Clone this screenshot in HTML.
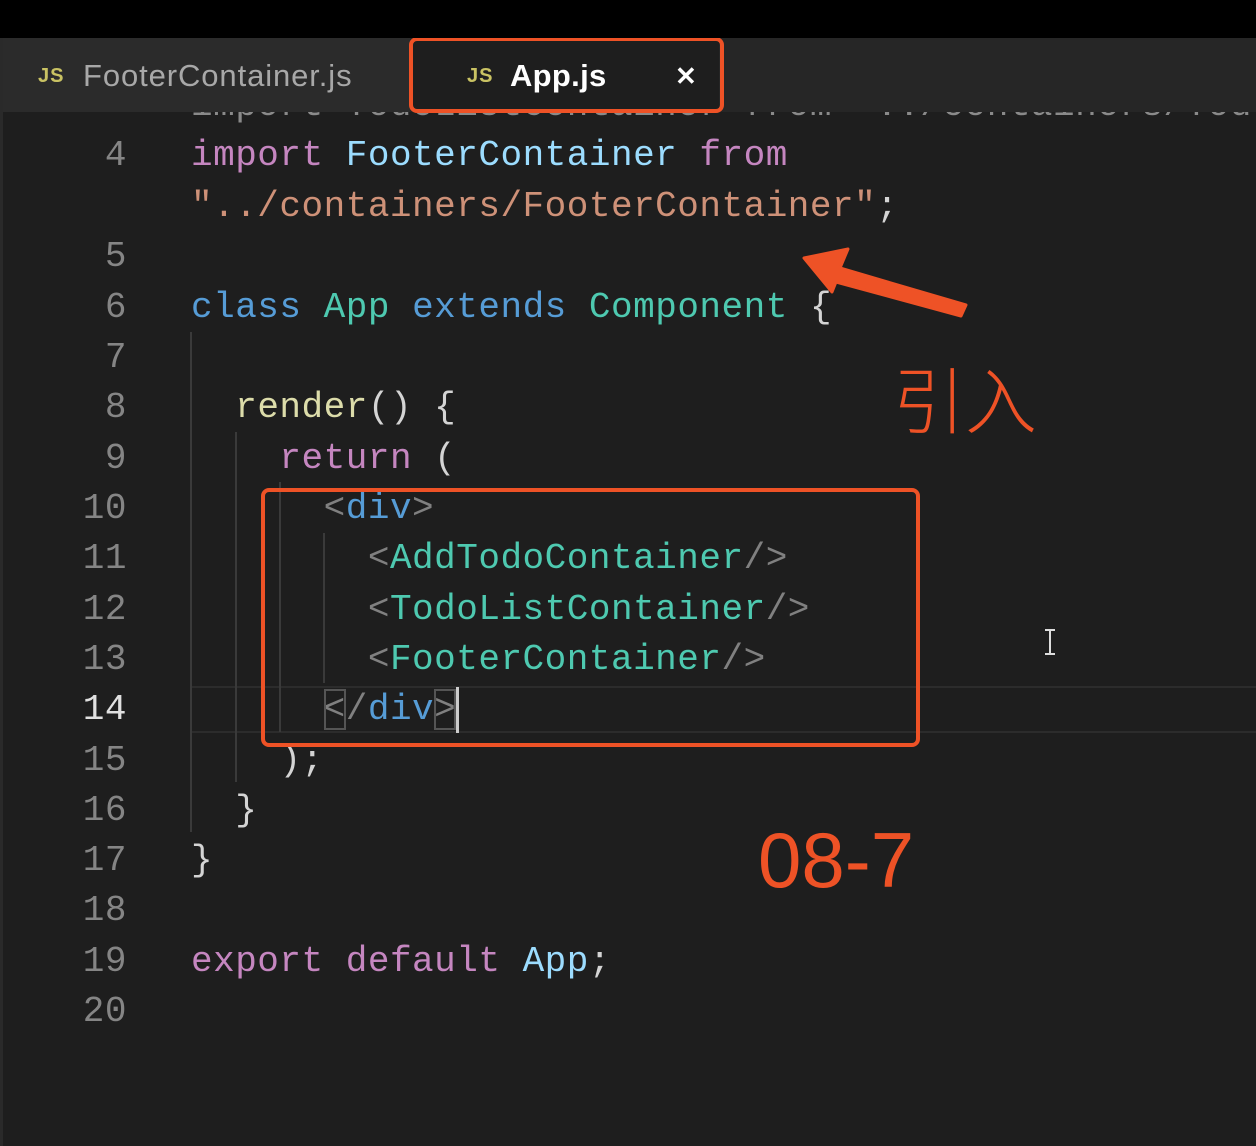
<!DOCTYPE html>
<html><head><meta charset="utf-8"><style>
*{margin:0;padding:0;box-sizing:border-box}
body{width:1256px;height:1146px;background:#1e1e1e;position:relative;overflow:hidden;font-family:"Liberation Mono",monospace}
.top{position:absolute;left:0;top:0;width:1256px;height:38px;background:#000;z-index:5}
.tabs{position:absolute;left:0;top:38px;width:1256px;height:74px;background:#262626;z-index:4}
.tab{position:absolute;top:0;height:74px;font-family:"Liberation Sans",sans-serif;font-size:31px;letter-spacing:0.9px;line-height:76px;white-space:nowrap}
.js{font-family:"Liberation Sans",sans-serif;font-weight:bold;color:#c9c263;font-size:20px;letter-spacing:1px;position:absolute;top:0}
.strip{position:absolute;left:0;top:38px;width:3px;height:1108px;background:#2a2a2a;z-index:6}
.code{position:absolute;left:0;top:2px;width:1256px;height:1144px;overflow:hidden}
.ln{position:absolute;left:0;width:127px;text-align:right;color:#858585;font-size:36px;letter-spacing:0.5px;height:50px;line-height:50px}
.c{position:absolute;white-space:pre;font-size:36px;letter-spacing:0.5px;height:50px;line-height:50px;color:#d4d4d4}
.k{color:#c586c0}.b{color:#9cdcfe}.s{color:#ce9178}.bl{color:#569cd6}.g{color:#4ec9b0}.y{color:#dcdcaa}.t{color:#808080}
.guide{position:absolute;width:2px;background:#3a3a3a}
.org{color:#ee5226}
</style></head><body>
<div class="top"></div>
<div class="strip"></div>
<div class="tabs">
 <div class="tab" style="left:0;width:410px;background:#2b2b2b;color:#a8a8a8"><span class="js" style="left:38px">JS</span><span style="position:absolute;left:83px">FooterContainer.js</span></div>
 <div class="tab" style="left:413px;width:306px;background:#1e1e1e;color:#fff"><span class="js" style="left:54px">JS</span><span style="position:absolute;left:97px;font-weight:bold;letter-spacing:0.3px">App.js</span><span style="position:absolute;left:262px;font-weight:bold;font-size:26px">✕</span></div>
 <div style="position:absolute;left:409px;top:-1px;width:315px;height:76px;border:4px solid #ee5226;border-radius:8px"></div>
</div>

<div class="code">
<div class="c" style="top:79px;left:191px;color:#8a8a8a">import TodoListContainer from "../containers/Tod</div>

<div class="ln" style="top:129px">4</div>
<div class="c" style="top:129px;left:191px"><span class="k">import</span> <span class="b">FooterContainer</span> <span class="k">from</span></div>
<div class="c s" style="top:180px;left:191px">"../containers/FooterContainer"<span style="color:#d4d4d4">;</span></div>
<div class="ln" style="top:230px">5</div>
<div class="ln" style="top:281px">6</div>
<div class="c" style="top:281px;left:191px"><span class="bl">class</span> <span class="g">App</span> <span class="bl">extends</span> <span class="g">Component</span> {</div>
<div class="ln" style="top:331px">7</div>
<div class="ln" style="top:381px">8</div>
<div class="c" style="top:381px;left:191px">  <span class="y">render</span>() {</div>
<div class="ln" style="top:432px">9</div>
<div class="c" style="top:432px;left:191px">    <span class="k">return</span> (</div>
<div class="ln" style="top:482px">10</div>
<div class="c" style="top:482px;left:191px">      <span class="t">&lt;</span><span class="bl">div</span><span class="t">&gt;</span></div>
<div class="ln" style="top:532px">11</div>
<div class="c" style="top:532px;left:191px">        <span class="t">&lt;</span><span class="g">AddTodoContainer</span><span class="t">/&gt;</span></div>
<div class="ln" style="top:583px">12</div>
<div class="c" style="top:583px;left:191px">        <span class="t">&lt;</span><span class="g">TodoListContainer</span><span class="t">/&gt;</span></div>
<div class="ln" style="top:633px">13</div>
<div class="c" style="top:633px;left:191px">        <span class="t">&lt;</span><span class="g">FooterContainer</span><span class="t">/&gt;</span></div>
<div style="position:absolute;left:190px;top:684px;width:1066px;height:47px;border-top:2px solid #2c2c2c;border-bottom:2px solid #2c2c2c"></div>
<div class="ln" style="top:683px;color:#e0e0e0">14</div>
<div class="c" style="top:683px;left:191px">      <span class="t" style="outline:2px solid #555;outline-offset:-2px">&lt;</span><span class="t">/</span><span class="bl">div</span><span class="t" style="outline:2px solid #555;outline-offset:-2px">&gt;</span></div>
<div style="position:absolute;left:456px;top:685px;width:3px;height:46px;background:#ccc"></div>
<div class="ln" style="top:734px">15</div>
<div class="c" style="top:734px;left:191px">    );</div>
<div class="ln" style="top:784px">16</div>
<div class="c" style="top:784px;left:191px">  }</div>
<div class="ln" style="top:834px">17</div>
<div class="c" style="top:834px;left:191px">}</div>
<div class="ln" style="top:884px">18</div>
<div class="ln" style="top:935px">19</div>
<div class="c" style="top:935px;left:191px"><span class="k">export</span> <span class="k">default</span> <span class="b">App</span>;</div>
<div class="ln" style="top:985px">20</div>

<div class="guide" style="left:190px;top:330px;height:500px"></div>
<div class="guide" style="left:235px;top:430px;height:350px"></div>
<div class="guide" style="left:279px;top:480px;height:250px"></div>
<div class="guide" style="left:323px;top:531px;height:150px"></div>
</div>

<div style="position:absolute;left:261px;top:488px;width:659px;height:259px;border:4px solid #ee5226;border-radius:8px"></div>

<svg style="position:absolute;left:0;top:0" width="1256" height="1146">
 <polygon points="804,258 848,249 840,268 966,305 961,316 836,282 832,292" fill="#ee5226" stroke="#ee5226" stroke-width="3" stroke-linejoin="round"/>
 <g stroke="#ddd" stroke-width="2" fill="none"><path d="M1045,630h10M1050,630v24M1045,654h10"/></g>
</svg>

<div class="org" style="position:absolute;left:893px;top:357px;font-family:'Noto Sans CJK SC',sans-serif;font-size:72px;font-weight:300;line-height:80px">引入</div>
<div class="org" style="position:absolute;left:758px;top:816px;font-family:'Liberation Sans',sans-serif;font-size:78px;line-height:88px">08-7</div>
</body></html>
